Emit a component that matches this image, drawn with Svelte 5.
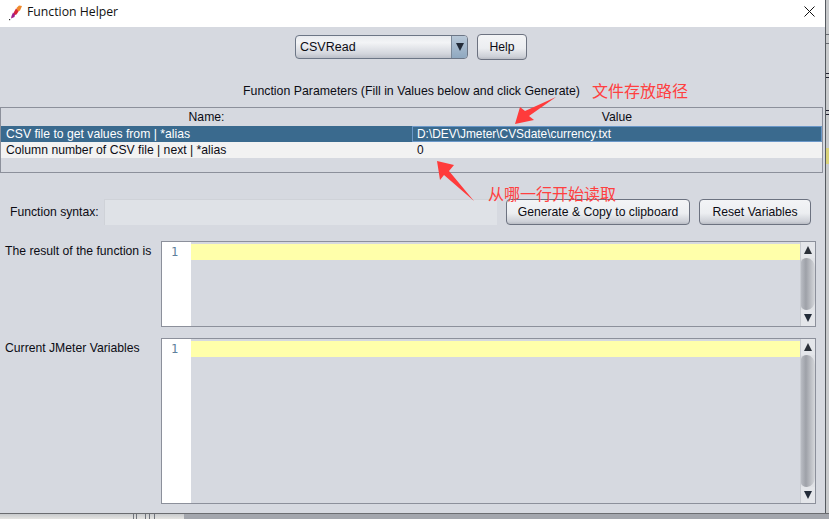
<script>
  const params = [
    { name: 'CSV file to get values from | *alias', value: 'D:\\DEV\\Jmeter\\CVSdate\\currency.txt', selected: true },
    { name: 'Column number of CSV file | next | *alias', value: '0', selected: false }
  ];
  const editors = [
    { label: 'The result of the function is', tall: false },
    { label: 'Current JMeter Variables', tall: true }
  ];
</script>

<div class="screen">
  <div class="top">
    <div class="window">
      <header class="titlebar">
        <svg class="feather" width="14" height="18" viewBox="0 0 14 18">
          <path d="M11 2.5 L14 3 L12 7.5 L9 9 L8 7 L9 4.5 Z" fill="#f08a2c" />
          <path d="M8 5.5 L6 9 L5 12.5 L8.5 11.5 L10.5 8.5 Z" fill="#d8263c" />
          <path d="M5 9.5 L3.5 13 L3 15.5 L6.5 14 L7 11.5 Z" fill="#a01e8c" />
          <rect x="1" y="16" width="1.2" height="1.2" fill="#333" />
        </svg>
        <span class="title">Function Helper</span>
        <svg class="close" width="11" height="11" viewBox="0 0 11 11">
          <path d="M0.5 0.5 L10.5 10.5 M10.5 0.5 L0.5 10.5" stroke="#111" stroke-width="1" fill="none" />
        </svg>
      </header>

      <main class="content">
        <div class="chooser">
          <div class="combo">
            <span class="combo-text">CSVRead</span>
            <span class="combo-arrow"><i class="tri down"></i></span>
          </div>
          <button class="btn help">Help</button>
        </div>

        <div class="params-title">Function Parameters (Fill in Values below and click Generate)</div>

        <div class="table">
          <div class="thead">
            <div class="th name-col">Name:</div>
            <div class="th">Value</div>
          </div>
          {#each params as p}
            <div class="row" class:selected={p.selected}>
              <div class="cell name-col">{p.name}</div>
              <div class="cell value">{p.value}</div>
            </div>
          {/each}
        </div>

        <div class="syntax">
          <label class="syntax-label" for="syntax-field">Function syntax:</label>
          <div class="field" id="syntax-field"></div>
          <button class="btn generate">Generate &amp; Copy to clipboard</button>
          <button class="btn reset">Reset Variables</button>
        </div>

        {#each editors as ed}
          <div class="editor-row" class:tall={ed.tall}>
            <div class="editor-label">{ed.label}</div>
            <div class="editor">
              <div class="gutter">1</div>
              <div class="text-area"><div class="line"></div></div>
              <div class="scrollbar">
                <div class="sb-btn"><i class="tri up"></i></div>
                <div class="sb-thumb"></div>
                <div class="sb-btn"><i class="tri down"></i></div>
              </div>
            </div>
          </div>
        {/each}
      </main>
    </div>
    <div class="edge">
      <i class="mark m1"></i><i class="mark m2"></i><i class="mark m3"></i><i class="mark m4"></i>
      <i class="mark m5"></i><i class="mark m6"></i><i class="mark yellow"></i>
    </div>
  </div>
  <div class="bottom">
    <i class="tick t1"></i><i class="tick t2"></i><i class="tick t3"></i><i class="tick t4"></i><i class="tick t5"></i>
    <div class="bottom-dark"></div>
  </div>

  <svg class="arrows" width="829" height="519" viewBox="0 0 829 519">
    <path d="M515 124 L520 107 L525 111 L556 97 L529 116 L534 120 Z" fill="#ff3b3b" />
    <path d="M437 161 L454 165 L449 171 L474 201 L444 175 L440 180 Z" fill="#ff3b3b" />
  </svg>
  <span class="note note-path">文件存放路径</span>
  <span class="note note-row">从哪一行开始读取</span>
</div>

<style>
  :global(body) {
    margin: 0;
    background: #d6d9e0;
  }

  .screen {
    position: relative;
    width: 829px;
    height: 519px;
    overflow: hidden;
    font-family: "Liberation Sans", Arial, sans-serif;
    font-size: 12.2px;
    color: #0c0c14;
    display: flex;
    flex-direction: column;
  }

  .top {
    display: flex;
    height: 513px;
  }

  .window {
    width: 825px;
    display: flex;
    flex-direction: column;
    background: #d6d9e0;
  }

  .titlebar {
    height: 27px;
    flex-shrink: 0;
    background: #fff;
    display: flex;
    align-items: center;
    padding-left: 8px;
    padding-right: 10px;
  }

  .feather {
    margin-right: 5px;
    margin-top: -3px;
  }

  .title {
    font-family: "Open Sans", "Noto Sans", sans-serif;
    font-size: 12.25px;
    color: #111;
    flex: 1;
    margin-bottom: 4px;
  }

  .close {
    margin-bottom: 5px;
  }

  .content {
    flex: 1;
    display: flex;
    flex-direction: column;
  }

  .chooser {
    display: flex;
    justify-content: center;
    align-items: center;
    gap: 9px;
    height: 26px;
    margin-top: 7px;
    padding-right: 3px;
  }

  .combo {
    width: 171px;
    height: 22px;
    border: 1px solid #6c7686;
    border-radius: 4px;
    background: linear-gradient(#e9ebef, #f3f4f6 30%, #d3d6dd 80%, #bcc0c9);
    display: flex;
    overflow: hidden;
  }

  .combo-text {
    flex: 1;
    padding-left: 4px;
    line-height: 22px;
    font-size: 12.5px;
  }

  .combo-arrow {
    width: 15px;
    background: linear-gradient(#b8c8d8, #8fa8c0);
    border-left: 1px solid #7a8898;
    display: flex;
    align-items: center;
    justify-content: center;
  }

  .tri {
    display: block;
    width: 0;
    height: 0;
    border-left: 4px solid transparent;
    border-right: 4px solid transparent;
  }

  .tri.down {
    border-top: 8px solid #222b38;
  }

  .tri.up {
    border-bottom: 8px solid #2a3038;
  }

  .btn {
    height: 26px;
    padding: 0;
    font: inherit;
    color: #0c0c14;
    border: 1px solid #6c7280;
    border-radius: 4px;
    background: linear-gradient(#f3f4f6, #eceef1 55%, #cdd0d7 90%, #b9bcc4);
  }

  .help {
    width: 50px;
  }

  .params-title {
    margin-top: 24px;
    height: 15px;
    line-height: 15px;
    padding-left: 243px;
    font-size: 12.33px;
  }

  .table {
    margin-top: 8px;
    width: 823px;
    height: 66px;
    box-sizing: border-box;
    border: 1px solid #8c909b;
  }

  .thead {
    display: flex;
    height: 18px;
    line-height: 19px;
  }

  .th {
    flex: 1;
    text-align: center;
  }

  .name-col {
    width: 411px;
    flex: none;
  }

  .row {
    display: flex;
    height: 16px;
    line-height: 16px;
    background: #f2f2f2;
  }

  .row.selected {
    background: #3a6a8e;
    color: #fff;
  }

  .cell {
    box-sizing: border-box;
    padding-left: 5px;
    white-space: nowrap;
  }

  .value {
    flex: 1;
    font-size: 11.9px;
  }

  .selected .value {
    border: 1px solid #6a97c8;
    line-height: 14px;
    padding-left: 4px;
  }

  .syntax {
    display: flex;
    align-items: center;
    margin-top: 26px;
    height: 26px;
  }

  .syntax-label {
    width: 104px;
    padding-left: 10px;
    flex-shrink: 0;
    box-sizing: border-box;
    white-space: nowrap;
  }

  .field {
    width: 393px;
    height: 26px;
    box-sizing: border-box;
    background: #dfe2e7;
    border-top: 1px solid #cfd2d8;
    border-left: 1px solid #cfd2d8;
  }

  .generate {
    width: 184px;
    margin-left: 9px;
  }

  .reset {
    width: 112px;
    margin-left: 9px;
  }

  .editor-row {
    display: flex;
    margin-top: 16px;
    height: 86px;
  }

  .editor-row.tall {
    margin-top: 11px;
    height: 166px;
  }

  .editor-label {
    width: 161px;
    padding-left: 5px;
    box-sizing: border-box;
    padding-top: 3px;
    line-height: 14px;
    flex-shrink: 0;
    white-space: nowrap;
  }

  .editor {
    width: 655px;
    box-sizing: border-box;
    border: 1px solid #8c909b;
    display: flex;
  }

  .gutter {
    width: 29px;
    background: #fff;
    color: #5f7f9c;
    font-family: "DejaVu Sans Mono", monospace;
    font-size: 12px;
    padding-top: 2px;
    padding-left: 9px;
    box-sizing: border-box;
    line-height: 16px;
    flex-shrink: 0;
  }

  .text-area {
    flex: 1;
    padding-top: 2px;
  }

  .line {
    height: 16px;
    background: #ffffaa;
  }

  .scrollbar {
    width: 15px;
    display: flex;
    flex-direction: column;
    background: #e0e2e6;
    border-left: 1px solid #c8cbd1;
    box-sizing: border-box;
  }

  .sb-btn {
    height: 16px;
    flex-shrink: 0;
    display: flex;
    align-items: center;
    justify-content: center;
    background: #e4e6ea;
  }

  .sb-thumb {
    flex: 1;
    background: linear-gradient(90deg, #b9bcc3, #9ea1a8 35%, #d6d8dc);
    border-radius: 6px 8px 8px 6px / 4px 10px 10px 4px;
  }

  .edge {
    position: relative;
    width: 4px;
    box-sizing: border-box;
    border-left: 1px solid #555a60;
    background: #c8cacc;
  }

  .mark {
    position: absolute;
    left: 0;
    width: 3px;
    height: 1px;
    background: #6a6e74;
  }

  .m1 { top: 34px; }
  .m2 { top: 43px; }
  .m3 { top: 73px; background: #223; }
  .m4 { top: 77px; background: #223; }
  .m5 { top: 110px; background: #223; }
  .m6 { top: 114px; background: #223; }

  .yellow {
    top: 148px;
    height: 16px;
    background: #d9d27a;
  }

  .bottom {
    position: relative;
    flex: 1;
    display: flex;
    justify-content: flex-end;
    border-top: 1px solid #6a6c70;
    background: linear-gradient(#c8cacc, #e4e4e2);
  }

  .bottom-dark {
    width: 645px;
    background: #a3a6ad;
    margin-left: auto;
  }

  .tick {
    position: absolute;
    top: 0;
    bottom: 0;
    width: 1px;
    background: #70747c;
  }

  .t1 { left: 133px; }
  .t2 { left: 136px; }
  .t3 { left: 145px; }
  .t4 { left: 149px; }
  .t5 { left: 154px; }

  .arrows {
    position: absolute;
    inset: 0;
    pointer-events: none;
  }

  .note {
    position: absolute;
    color: #ff4040;
    font-family: "Noto Sans CJK SC", sans-serif;
    font-size: 16px;
    line-height: 20px;
    white-space: nowrap;
  }

  .note-path {
    left: 592px;
    top: 80px;
  }

  .note-row {
    left: 488px;
    top: 183px;
  }
</style>
